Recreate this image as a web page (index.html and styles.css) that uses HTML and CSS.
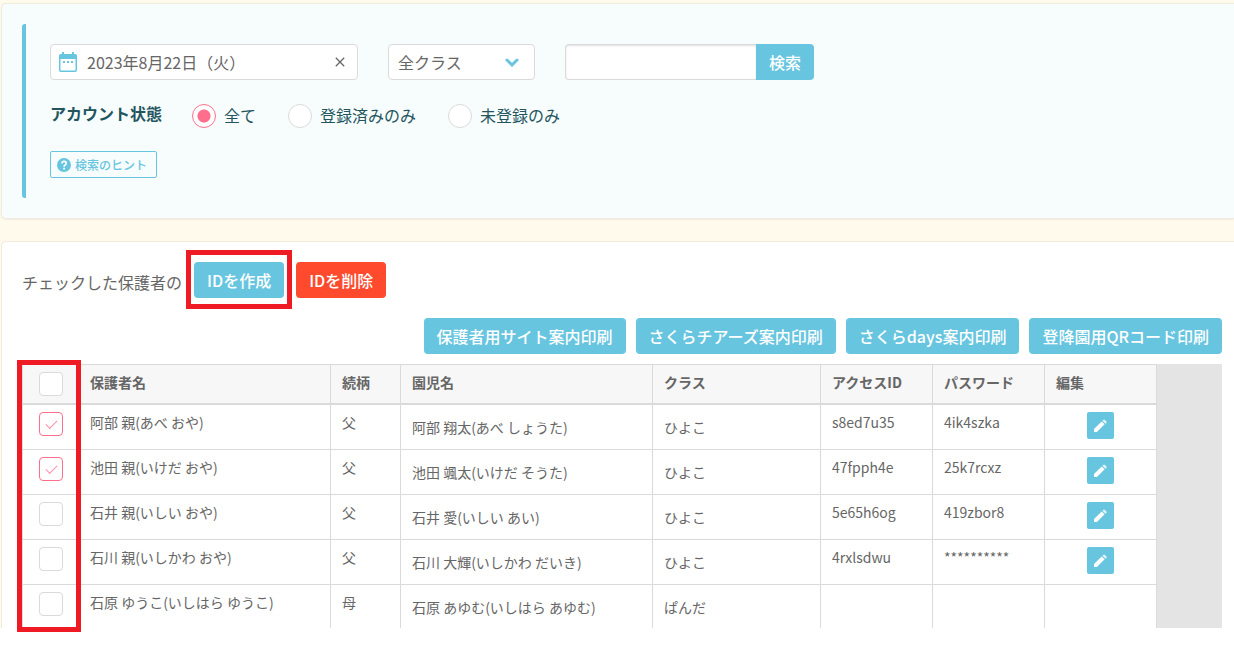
FILE: index.html
```html
<!DOCTYPE html>
<html lang="ja">
<head>
<meta charset="utf-8">
<meta name="viewport" content="width=device-width, initial-scale=1">
<title>保護者アカウント管理</title>
<link rel="stylesheet" href="styles.css">
</head>
<body>
<svg class="sprite" aria-hidden="true">
  <symbol id="pencil" viewBox="0 0 27 27">
    <path fill="#fff" d="M7 20v-2.900l7.700-7.700 2.900 2.900L9.900 20z"/>
    <path fill="#e4f5fa" d="M15.400 8.700l.9-.8q.8-.6 1.600 0l1.500 1.500q.6.8 0 1.600l-.9.800z"/>
  </symbol>
</svg>
<main class="page">
  <section class="panel panel-filter">
    <form class="filter" onsubmit="return false">
      <div class="fields">
        <div class="date-field">
          <svg class="date-icon" viewBox="0 0 18 20" width="18" height="20" aria-hidden="true">
            <path fill="#67c5e0" fill-rule="evenodd" d="M3 0h2v2h8V0h2v2h1.200A1.800 1.800 0 0 1 18 3.800V18.200A1.800 1.800 0 0 1 16.200 20H1.800A1.800 1.800 0 0 1 0 18.200V3.800A1.800 1.800 0 0 1 1.800 2H3zM1.500 7v11.500h15V7z"/>
            <path fill="#67c5e0" d="M4 9h2v2H4zM8 9h2v2H8zM12 9h2v2h-2z"/>
          </svg>
          <input class="date-input" type="text" aria-label="日付" value="2023年8月22日（火）">
          <button class="clear" type="button" aria-label="クリア">
            <svg viewBox="0 0 10 10" width="10" height="10" aria-hidden="true"><path d="M.8.8l8.400 8.400M9.200.8L.8 9.200" stroke="#666" stroke-width="1.300" fill="none"/></svg>
          </button>
        </div>
        <div class="select-field">
          <select class="class-select" aria-label="クラス"><option>全クラス</option></select>
          <svg class="chevron" viewBox="0 0 14 9" width="14" height="9" aria-hidden="true"><path d="M2 2l5 5 5-5" fill="none" stroke="#67c5e0" stroke-width="3" stroke-linecap="round"/></svg>
        </div>
        <div class="search">
          <input class="search-input" type="text" aria-label="検索キーワード">
          <button class="btn search-btn" type="submit">検索</button>
        </div>
      </div>
      <div class="status" role="radiogroup" aria-labelledby="status-title">
        <span class="status-title" id="status-title">アカウント状態</span>
        <div class="radios">
          <label class="radio"><input type="radio" name="status" checked>全て</label>
          <label class="radio"><input type="radio" name="status">登録済みのみ</label>
          <label class="radio"><input type="radio" name="status">未登録のみ</label>
        </div>
      </div>
      <button class="hint" type="button">
        <svg viewBox="0 0 14 14" width="14" height="14" aria-hidden="true"><circle cx="7" cy="7" r="7" fill="#67c5e0"/><path d="M4.900 5.500Q5 3.400 7.100 3.400T9.200 5.300Q9.200 6.300 8.100 7 7.100 7.600 7.100 8.700" fill="none" stroke="#fff" stroke-width="1.700"/><path d="M6.200 9.700h1.800v1.800H6.200z" fill="#fff"/></svg>
        検索のヒント
      </button>
    </form>
  </section>

  <section class="panel panel-list">
    <div class="actions">
      <span class="actions-label">チェックした保護者の</span>
      <span class="marked"><button class="btn" type="button">IDを作成</button></span>
      <button class="btn btn-danger" type="button">IDを削除</button>
    </div>
    <div class="prints">
      <button class="btn" type="button">保護者用サイト案内印刷</button>
      <button class="btn" type="button">さくらチアーズ案内印刷</button>
      <button class="btn" type="button">さくらdays案内印刷</button>
      <button class="btn" type="button">登降園用QRコード印刷</button>
    </div>
    <div class="grid">
      <table class="table">
        <colgroup><col class="c-check"><col class="c-name"><col class="c-rel"><col class="c-name"><col class="c-class"><col class="c-id"><col class="c-id"><col class="c-id"></colgroup>
        <thead>
          <tr><th class="check"><input type="checkbox" aria-label="全て選択"></th><th>保護者名</th><th>続柄</th><th>園児名</th><th>クラス</th><th>アクセスID</th><th>パスワード</th><th>編集</th></tr>
        </thead>
        <tbody>
          <tr><td class="check"><input type="checkbox" aria-label="阿部 親" checked></td><td>阿部 親(あべ おや)</td><td>父</td><td class="child">阿部 翔太(あべ しょうた)</td><td class="child">ひよこ</td><td>s8ed7u35</td><td>4ik4szka</td><td class="edit-cell"><button class="edit" type="button" aria-label="編集"><svg width="27" height="27"><use href="#pencil"/></svg></button></td></tr>
          <tr><td class="check"><input type="checkbox" aria-label="池田 親" checked></td><td>池田 親(いけだ おや)</td><td>父</td><td class="child">池田 颯太(いけだ そうた)</td><td class="child">ひよこ</td><td>47fpph4e</td><td>25k7rcxz</td><td class="edit-cell"><button class="edit" type="button" aria-label="編集"><svg width="27" height="27"><use href="#pencil"/></svg></button></td></tr>
          <tr><td class="check"><input type="checkbox" aria-label="石井 親"></td><td>石井 親(いしい おや)</td><td>父</td><td class="child">石井 愛(いしい あい)</td><td class="child">ひよこ</td><td>5e65h6og</td><td>419zbor8</td><td class="edit-cell"><button class="edit" type="button" aria-label="編集"><svg width="27" height="27"><use href="#pencil"/></svg></button></td></tr>
          <tr><td class="check"><input type="checkbox" aria-label="石川 親"></td><td>石川 親(いしかわ おや)</td><td>父</td><td class="child">石川 大輝(いしかわ だいき)</td><td class="child">ひよこ</td><td>4rxlsdwu</td><td>**********</td><td class="edit-cell"><button class="edit" type="button" aria-label="編集"><svg width="27" height="27"><use href="#pencil"/></svg></button></td></tr>
          <tr><td class="check"><input type="checkbox" aria-label="石原 ゆうこ"></td><td>石原 ゆうこ(いしはら ゆうこ)</td><td>母</td><td class="child">石原 あゆむ(いしはら あゆむ)</td><td class="child">ぱんだ</td><td></td><td></td><td></td></tr>
        </tbody>
      </table>
    </div>
  </section>
</main>
</body>
</html>
```

FILE: styles.css
```css
*, *::before, *::after { box-sizing: border-box; }

body {
  min-height: 100vh;
  margin: 0;
  padding-bottom: 20px;
  background: #fff;
  color: #666;
  font-family: "Noto Sans CJK JP", "Noto Sans", sans-serif;
  font-size: 16px;
  line-height: 24px;
}

button, input, select { font: inherit; color: inherit; margin: 0; }
button { cursor: pointer; }
svg { display: block; }
.sprite { position: absolute; width: 0; height: 0; }

.page {
  display: flex;
  flex-direction: column;
  gap: 22px;
  padding: 3px 0 0 1px;
  background: #fffaec;
}

.panel {
  border: 1px solid #efebdf;
  border-right: 0;
  border-radius: 5px 0 0 5px;
  background: #fff;
}
.panel-filter {
  padding: 20px 12px 20px 20px;
  background: #f7fdfd;
  box-shadow: 0 1px 2px rgba(0, 0, 0, 0.06);
}
.panel-list {
  padding: 20px 12px 0 20px;
  border-bottom: 0;
  border-bottom-left-radius: 0;
}

/* Filter form */
.filter {
  display: flex;
  flex-direction: column;
  align-items: flex-start;
  gap: 23px;
  padding: 20px 0 20px 24px;
  border-left: 4px solid #67c5e0;
  border-radius: 3px 0 0 3px;
}
.fields { display: flex; gap: 30px; margin-bottom: 1px; }

.date-field, .select-field, .search-input {
  height: 36px;
  border: 1px solid #dadada;
  border-radius: 4px;
  background: #fff;
}
.date-field {
  display: flex;
  align-items: center;
  gap: 10px;
  width: 308px;
  padding: 0 12px 0 8px;
}
.date-input {
  flex: 1;
  min-width: 0;
  height: 34px;
  padding: 0;
  border: 0;
  outline: 0;
  background: none;
}
.clear { padding: 0; border: 0; background: none; }

.select-field { display: grid; align-items: center; width: 147px; }
.class-select {
  grid-area: 1 / 1;
  width: 100%;
  height: 34px;
  padding: 0 40px 0 9px;
  border: 0;
  background: none;
  appearance: none;
}
.chevron {
  grid-area: 1 / 1;
  justify-self: end;
  margin-right: 15px;
  pointer-events: none;
}

.search { display: flex; }
.search-input {
  width: 191px;
  padding: 0 10px;
  border-right: 0;
  border-radius: 4px 0 0 4px;
  box-shadow: inset 0 1px 2px rgba(0, 0, 0, 0.12);
}

.btn {
  height: 36px;
  padding: 0 13px;
  border: 0;
  border-radius: 4px;
  background: #67c5e0;
  color: #fff;
  font-weight: 500;
  white-space: nowrap;
}
.btn-danger { background: #ff4a2e; }
.search-btn { border-radius: 0 4px 4px 0; }

.status {
  display: flex;
  align-items: flex-start;
  gap: 30px;
  color: #24555f;
}
.status-title { font-weight: 700; line-height: 18px; }
.radios { display: flex; gap: 32px; }
.radio { display: flex; align-items: flex-start; gap: 8px; line-height: 22px; }
.radio input {
  width: 24px;
  height: 24px;
  border: 1px solid #dadada;
  border-radius: 50%;
  background: #fff;
  appearance: none;
}
.radio input:checked {
  border-color: #ff6f8b;
  background: radial-gradient(circle, #ff6f8b 6px, #fff 7px);
}

.hint {
  display: flex;
  align-items: center;
  gap: 4px;
  height: 27px;
  padding: 0 9px 0 6px;
  border: 1px solid #67c5e0;
  border-radius: 2px;
  background: none;
  color: #67c5e0;
  font-size: 12px;
  font-weight: 500;
}

/* Actions */
.actions { display: flex; align-items: flex-end; gap: 12px; }
.actions-label { line-height: 32px; }
.marked { position: relative; display: flex; }
.marked::after, .grid::after {
  content: "";
  position: absolute;
  border: 5px solid #ee1b24;
  pointer-events: none;
}
.marked::after { inset: -12px -8px -11px; }
.prints {
  display: flex;
  flex-wrap: wrap;
  justify-content: flex-end;
  gap: 10px;
  margin: 20px 0 10px;
}

/* Table */
.grid { position: relative; background: #e4e4e4; }
.grid::after { top: -4px; bottom: -4px; left: -5px; width: 64px; }
.table {
  width: 1135px;
  table-layout: fixed;
  border-collapse: separate;
  border-spacing: 0;
  font-size: 14px;
  line-height: 20px;
}
.c-check { width: 57px; }
.c-name { width: 252px; }
.c-rel { width: 70px; }
.c-class { width: 168px; }
.c-id { width: 112px; }

.table th, .table td {
  padding: 7px 11px 0;
  border-right: 1px solid #dadada;
  text-align: left;
  vertical-align: top;
  white-space: nowrap;
}
.table th {
  height: 41px;
  border-top: 1px solid #dadada;
  border-bottom: 2px solid #dadada;
  background: #f7f7f7;
  font-weight: 700;
}
.table td { height: 45px; border-bottom: 1px solid #dadada; background: #fff; }
.table tbody tr:last-child td { height: 43px; border-bottom: 0; }
.table .child { padding-top: 12px; }
.table .check {
  padding: 7px 0 0 16px;
  border-left: 1px solid #dadada;
}
.check input {
  display: block;
  width: 24px;
  height: 24px;
  border: 1px solid #dadada;
  border-radius: 4px;
  background: #fff;
  appearance: none;
}
.check input:checked { display: grid; place-items: center; border-color: #ff6f8b; }
.check input:checked::before {
  content: "";
  width: 11px;
  height: 6px;
  margin-bottom: 2px;
  border: solid #ff8fa5;
  border-width: 0 0 1px 1px;
  transform: rotate(-45deg);
}
.edit {
  display: block;
  width: 27px;
  height: 27px;
  margin: 0 auto;
  padding: 0;
  border: 0;
  border-radius: 2px;
  background: #67c5e0;
}
```
